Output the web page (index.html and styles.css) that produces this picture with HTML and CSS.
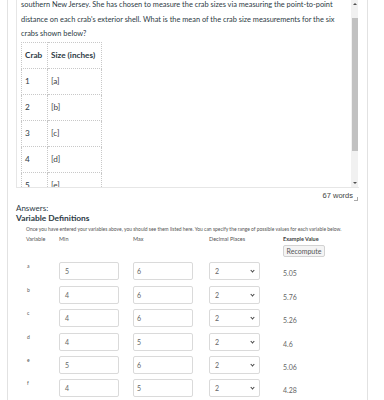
FILE: index.html
```html
<!DOCTYPE html>
<html>
<head>
<meta charset="utf-8">
<link rel="stylesheet" href="styles.css">
</head>
<body>
<div class="frame">
  <div class="editor">
    <div class="editor-body">
      <div class="content">
        <p class="question">southern New Jersey. She has chosen to measure the crab sizes via measuring the point-to-point<br>distance on each crab's exterior shell. What is the mean of the crab size measurements for the six<br>crabs shown below?</p>
        <table class="crabs">
          <tr><th class="c1">Crab</th><th class="c2">Size (inches)</th></tr>
          <tr><td class="c1">1</td><td class="c2">[a]</td></tr>
          <tr><td class="c1">2</td><td class="c2">[b]</td></tr>
          <tr><td class="c1">3</td><td class="c2">[c]</td></tr>
          <tr><td class="c1">4</td><td class="c2">[d]</td></tr>
          <tr><td class="c1">5</td><td class="c2">[e]</td></tr>
        </table>
      </div>
    </div>
    <div class="scrollbar">
      <div class="arrow up"></div>
      <div class="thumb"></div>
      <div class="track"></div>
      <div class="arrow down"></div>
    </div>
  </div>
  <div class="words"><span>67 words</span><span class="grip"></span></div>

  <div class="answers">Answers:</div>
  <div class="vd-title">Variable Definitions</div>
  <div class="note">Once you have entered your variables above, you should see them listed here. You can specify the range of possible values for each variable below.</div>

  <div class="vars">
    <div class="h">Variable</div>
    <div class="h">Min</div>
    <div class="h">Max</div>
    <div class="h">Decimal Places</div>
    <div class="h hb">Example Value<div class="btn">Recompute</div></div>

    <div class="vn">a</div><div class="inp">5</div><div class="inp">6</div><div class="sel">2<span class="chev"></span></div><div class="ex">5.05</div>
    <div class="vn">b</div><div class="inp">4</div><div class="inp">6</div><div class="sel">2<span class="chev"></span></div><div class="ex">5.76</div>
    <div class="vn">c</div><div class="inp">4</div><div class="inp">6</div><div class="sel">2<span class="chev"></span></div><div class="ex">5.26</div>
    <div class="vn">d</div><div class="inp">4</div><div class="inp">5</div><div class="sel">2<span class="chev"></span></div><div class="ex">4.6</div>
    <div class="vn">e</div><div class="inp">5</div><div class="inp">6</div><div class="sel">2<span class="chev"></span></div><div class="ex">5.06</div>
    <div class="vn">f</div><div class="inp">4</div><div class="inp">5</div><div class="sel">2<span class="chev"></span></div><div class="ex">4.28</div>
  </div>
</div>
</body>
</html>
```
FILE: styles.css
```css
html, body {
  margin: 0;
  padding: 0;
  background: #fff;
  font-family: Lato, "Noto Sans", sans-serif;
  color: #2d3b45;
  overflow: hidden;
}
.frame {
  margin-left: 7px;
  width: 359px;
  height: 400px;
  border-left: 1px solid #e2e2e2;
  border-right: 1px solid #e2e2e2;
}
.editor {
  margin-left: 8px;
  width: 342px;
  height: 187px;
  display: flex;
  border-left: 1px solid #e6e6e6;
  border-bottom: 1px solid #e6e6e6;
}
.editor-body {
  flex: 1;
  overflow: hidden;
}
.content {
  margin-top: -2px;
  padding-left: 4px;
}
.question {
  margin: 0;
  font-size: 7.4px;
  line-height: 14.5px;
  white-space: nowrap;
}
.crabs {
  border-collapse: collapse;
  margin-top: 0;
  border: 1px dotted #c8c8c8;
}
.crabs th, .crabs td {
  border: 1px dotted #c8c8c8;
  height: 25px;
  padding: 0 0 0 3px;
  text-align: left;
  font-size: 8.2px;
  vertical-align: middle;
}
.crabs th { font-weight: 700; }
.crabs .c1 { width: 22px; }
.crabs .c2 { width: 50px; }
.crabs td.c2 { color: #3d3d3d; }
.scrollbar {
  width: 7px;
  margin-right: 1px;
  background: #f1f1f1;
  display: flex;
  flex-direction: column;
  align-items: center;
}
.arrow {
  width: 0;
  height: 0;
  border-left: 2px solid transparent;
  border-right: 2px solid transparent;
  margin: 3px 0;
}
.arrow.up { border-bottom: 2px solid #505050; margin-top: 3px; }
.arrow.down { border-top: 2px solid #505050; margin-bottom: 3px; }
.thumb {
  width: 6px;
  height: 133px;
  margin-top: 10px;
  background: #c1c1c1;
}
.track { flex: 1; }
.words {
  height: 13px;
  display: flex;
  justify-content: flex-end;
  align-items: center;
  font-family: "Liberation Sans", Arial, sans-serif;
  font-size: 7.5px;
  color: #444;
  padding-right: 9px;
  padding-top: 1px;
}
.grip {
  width: 3px;
  height: 3px;
  margin-left: 1px;
  margin-top: 6px;
  border-right: 1px solid #aaa;
  border-bottom: 1px solid #aaa;
}
.answers {
  margin-left: 8px;
  font-size: 8px;
  line-height: 10px;
  margin-top: 1px;
}
.vd-title {
  margin-left: 8px;
  font-size: 8.4px;
  font-weight: 700;
  line-height: 11px;
  margin-top: 0;
}
.note {
  margin-left: 18px;
  font-size: 4.95px;
  line-height: 7px;
  margin-top: 2px;
  color: #555;
  white-space: nowrap;
}
.vars {
  margin-left: 18px;
  margin-top: 3px;
  display: grid;
  grid-template-columns: 33px 74px 76px 74px 60px;
  grid-template-rows: 21px;
  grid-auto-rows: 18px;
  row-gap: 5.4px;
  font-size: 5.5px;
  color: #555;
}
.h {
  line-height: 7px;
  height: 21px;
  margin-bottom: -2.4px;
}
.hb { font-weight: 700; color: #444; }
.btn {
  margin-top: 2px;
  width: 40px;
  height: 10px;
  border: 1px solid #d2d2d2;
  background: #f4f4f4;
  border-radius: 2px;
  font-weight: 400;
  font-size: 7px;
  line-height: 10px;
  text-align: center;
  color: #555;
}
.vn {
  padding-left: 1px;
  padding-top: 1px;
  font-size: 5px;
  line-height: 7px;
}
.inp, .sel {
  box-sizing: border-box;
  height: 18px;
  border: 1px solid #dadada;
  border-radius: 2px;
  font-size: 7px;
  line-height: 16px;
  color: #666;
}
.inp {
  width: 60px;
  padding-left: 5px;
}
.inp:nth-child(5n+3) { padding-left: 3px; }
.sel {
  width: 51px;
  padding-left: 5px;
  position: relative;
}
.chev {
  position: absolute;
  right: 5px;
  top: 6px;
  width: 2px;
  height: 2px;
  border-right: 1px solid #444;
  border-bottom: 1px solid #444;
  transform: rotate(45deg);
}
.ex {
  font-size: 7px;
  line-height: 7px;
  padding-top: 8px;
  color: #666;
}
```
